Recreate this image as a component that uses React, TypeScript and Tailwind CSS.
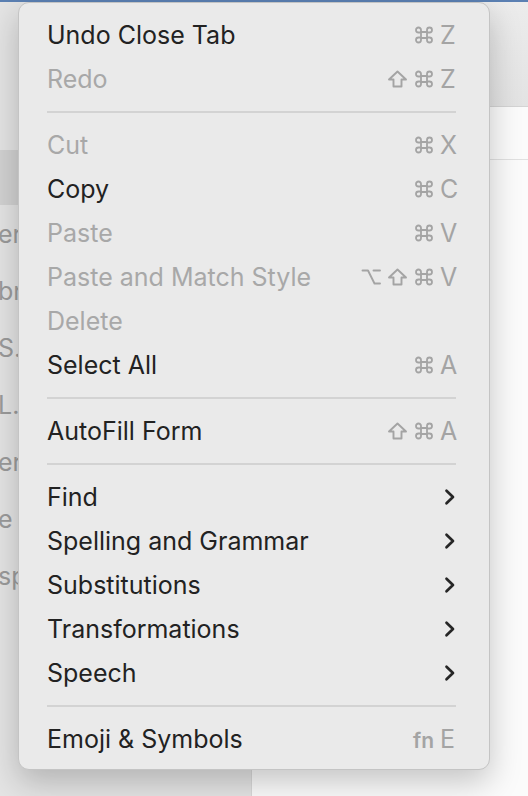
import React from "react";

type Item =
  | { kind: "sep" }
  | { kind: "item"; label: string; disabled?: boolean; keys?: string[]; sub?: boolean; fn?: boolean };

const MENU: Item[] = [
  { kind: "item", label: "Undo Close Tab", keys: ["cmd", "Z"] },
  { kind: "item", label: "Redo", disabled: true, keys: ["shift", "cmd", "Z"] },
  { kind: "sep" },
  { kind: "item", label: "Cut", disabled: true, keys: ["cmd", "X"] },
  { kind: "item", label: "Copy", keys: ["cmd", "C"] },
  { kind: "item", label: "Paste", disabled: true, keys: ["cmd", "V"] },
  { kind: "item", label: "Paste and Match Style", disabled: true, keys: ["opt", "shift", "cmd", "V"] },
  { kind: "item", label: "Delete", disabled: true },
  { kind: "item", label: "Select All", keys: ["cmd", "A"] },
  { kind: "sep" },
  { kind: "item", label: "AutoFill Form", keys: ["shift", "cmd", "A"] },
  { kind: "sep" },
  { kind: "item", label: "Find", sub: true },
  { kind: "item", label: "Spelling and Grammar", sub: true },
  { kind: "item", label: "Substitutions", sub: true },
  { kind: "item", label: "Transformations", sub: true },
  { kind: "item", label: "Speech", sub: true },
  { kind: "sep" },
  { kind: "item", label: "Emoji & Symbols", fn: true },
];

// sidebar rows, mostly hidden under the menu
const SIDEBAR = ["er", "br", "S.L", "L.", "er", "e (", "sp"];

function Chevron() {
  return (
    <svg width="13" height="18" viewBox="0 0 13 18" className="text-[#262626]">
      <path d="M3.5 2.8 L10 9 L3.5 15.2" fill="none" stroke="currentColor" strokeWidth="2.7" strokeLinecap="round" strokeLinejoin="round" />
    </svg>
  );
}

function Mod({ name }: { name: string }) {
  if (name === "cmd") {
    return (
      <svg width="20" height="20" viewBox="0 0 20 20" fill="none" stroke="currentColor" strokeWidth="1.8">
        <path d="M7 7 H13 V13 H7 Z" />
        <path d="M7 7 V5 A2.5 2.5 0 1 0 4.5 7.5 H7" />
        <path d="M13 7 V5 A2.5 2.5 0 1 1 15.5 7.5 H13" />
        <path d="M7 13 V15 A2.5 2.5 0 1 1 4.5 12.5 H7" />
        <path d="M13 13 V15 A2.5 2.5 0 1 0 15.5 12.5 H13" />
      </svg>
    );
  }
  if (name === "shift") {
    return (
      <svg width="21" height="20" viewBox="0 0 21 20" fill="none" stroke="currentColor" strokeWidth="1.9" strokeLinejoin="round">
        <path d="M10.5 2.5 L19 10.5 H14.5 V17.5 H6.5 V10.5 H2 Z" />
      </svg>
    );
  }
  return (
    <svg width="20" height="20" viewBox="0 0 20 20" fill="none" stroke="currentColor" strokeWidth="1.9" strokeLinecap="round" strokeLinejoin="round">
      <path d="M1.5 3.5 H7 L13.5 16.5 H19" />
      <path d="M12.5 3.5 H19" />
    </svg>
  );
}

function Keys({ keys }: { keys: string[] }) {
  const letter = keys[keys.length - 1];
  const mods = keys.slice(0, -1);
  return (
    <div className="flex items-center gap-[6px] text-[#a4a4a4]">
      {mods.map((m, i) => (
        <Mod key={i} name={m} />
      ))}
      <span className="w-[16px] text-left text-[25px] leading-none">{letter}</span>
    </div>
  );
}

export default function App() {
  return (
    <div className="relative w-[528px] h-[796px] overflow-hidden bg-[#fafafa] font-['Inter','Noto_Sans',sans-serif]">
      <div className="h-[2px] bg-[#5b80b3]" />
      <div className="flex h-[794px]">
        <aside className="w-[252px] bg-[#e4e4e4] border-r border-[#d9d9d9] flex flex-col">
          <div className="h-[148px]" />
          <div className="h-[55px] bg-[#d2d2d2]" />
          <div className="flex flex-col pt-[1px]">
            {SIDEBAR.map((s, i) => (
              <div key={i} className="h-[57px] flex items-center text-[25px] text-[#9b9b9b] -ml-[2px] whitespace-nowrap">
                {s}
              </div>
            ))}
          </div>
        </aside>
        <main className="flex-1 flex flex-col">
          <div className="h-[105px] bg-gradient-to-b from-[#ececec] to-[#e3e3e3] border-b border-[#d4d4d4]" />
          <div className="h-[53px] bg-[#fbfbfb] border-b border-[#e1e1e1]" />
          <div className="flex-1 bg-[#fbfbfb]" />
        </main>
      </div>

      <div className="absolute left-[18px] top-[2px] w-[472px] h-[768px] rounded-[11px] bg-[#eaeaea] border border-[#c4c4c4] shadow-[0_12px_32px_rgba(0,0,0,0.22)] pt-[10px] pb-[8px] pl-[28px] pr-[33px]">
        {MENU.map((it, i) =>
          it.kind === "sep" ? (
            <div key={i} className="h-[22px] flex items-center">
              <div className="h-[2px] w-full bg-[#d3d3d3]" />
            </div>
          ) : (
            <div key={i} className="h-[44px] flex items-center justify-between">
              <span className={`text-[25px] leading-none ${it.disabled ? "text-[#a8a8a8]" : "text-[#222222]"}`}>
                {it.label}
              </span>
              {it.keys && <Keys keys={it.keys} />}
              {it.sub && <Chevron />}
              {it.fn && (
                <div className="flex items-baseline gap-[6px] text-[#a4a4a4]">
                  <span className="text-[21px] font-semibold leading-none">fn</span>
                  <span className="w-[16px] text-[25px] leading-none">E</span>
                </div>
              )}
            </div>
          )
        )}
      </div>
    </div>
  );
}
